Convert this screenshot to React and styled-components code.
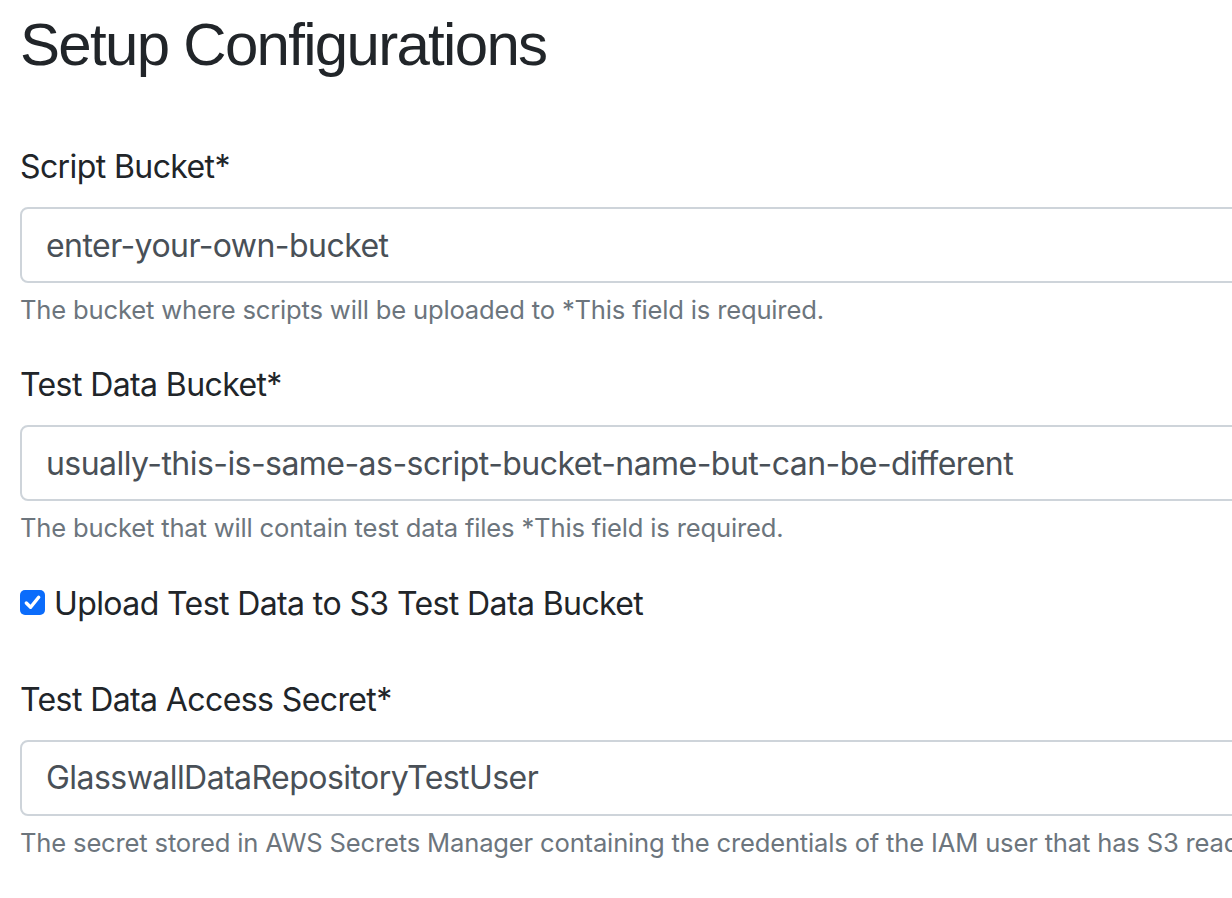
import styled, { createGlobalStyle } from 'styled-components'

const GlobalStyle = createGlobalStyle`
    html, body {
        margin: 0;
        padding: 0;
        background: #fff;
        overflow: hidden;
    }
    body {
        font-family: Inter, "Liberation Sans", Arial, sans-serif;
        color: #212529;
    }
`

const Page = styled.div`
    width: 1560px;
    padding: 0 20px;
    box-sizing: border-box;
`
const Title = styled.h2`
    margin: 9px 0 62px;
    font-family: "Liberation Sans", Arial, sans-serif;
    font-size: 60px;
    font-weight: 500;
    line-height: 72px;
    letter-spacing: -1.7px;
    color: #212529;
`
const Group = styled.div`
    margin-bottom: ${p => p.$gap || 32}px;
`
const Label = styled.label`
    display: block;
    margin-bottom: 16px;
    font-size: 32px;
    line-height: 48px;
    letter-spacing: -0.6px;
    color: #212529;
`
const Input = styled.input`
    display: block;
    width: 100%;
    height: 76px;
    box-sizing: border-box;
    padding: 0 24px;
    font-family: inherit;
    font-size: 32px;
    letter-spacing: -0.55px;
    color: #495057;
    background: #fff;
    border: 2px solid #ced4da;
    border-radius: 8px;
    outline: none;
`
const Help = styled.small`
    display: block;
    margin-top: 8px;
    font-size: 25.6px;
    line-height: 38.4px;
    letter-spacing: -0.18px;
    white-space: nowrap;
    color: #6c757d;
`
const CheckRow = styled.label`
    display: flex;
    align-items: center;
    gap: 9px;
    font-size: 32px;
    line-height: 48px;
    letter-spacing: -0.6px;
    color: #212529;
`
const Box = styled.span`
    width: 25px;
    height: 25px;
    margin-top: -2px;
    border-radius: 5px;
    background: #0b6cfb;
    display: flex;
    align-items: center;
    justify-content: center;
    flex-shrink: 0;
`

const Check = () => (
    <Box>
        <svg width="19" height="19" viewBox="0 0 20 20">
            <path d="M3.5 10.5 L8 15 L16.5 4.5" fill="none" stroke="#fff" strokeWidth="3.6" strokeLinecap="round" strokeLinejoin="round" />
        </svg>
    </Box>
)

const App = () => {
    return <Page>
        <GlobalStyle />
        <Title>Setup Configurations</Title>
        <Group>
            <Label>Script Bucket*</Label>
            <Input defaultValue="enter-your-own-bucket" />
            <Help>The bucket where scripts will be uploaded to *This field is required.</Help>
        </Group>
        <Group>
            <Label>Test Data Bucket*</Label>
            <Input defaultValue="usually-this-is-same-as-script-bucket-name-but-can-be-different" />
            <Help>The bucket that will contain test data files *This field is required.</Help>
        </Group>
        <Group $gap={48}>
            <CheckRow>
                <Check />
                Upload Test Data to S3 Test Data Bucket
            </CheckRow>
        </Group>
        <Group>
            <Label>Test Data Access Secret*</Label>
            <Input defaultValue="GlasswallDataRepositoryTestUser" />
            <Help>The secret stored in AWS Secrets Manager containing the credentials of the IAM user that has S3 read access to the test data bucket</Help>
        </Group>
    </Page>
}

export default App
